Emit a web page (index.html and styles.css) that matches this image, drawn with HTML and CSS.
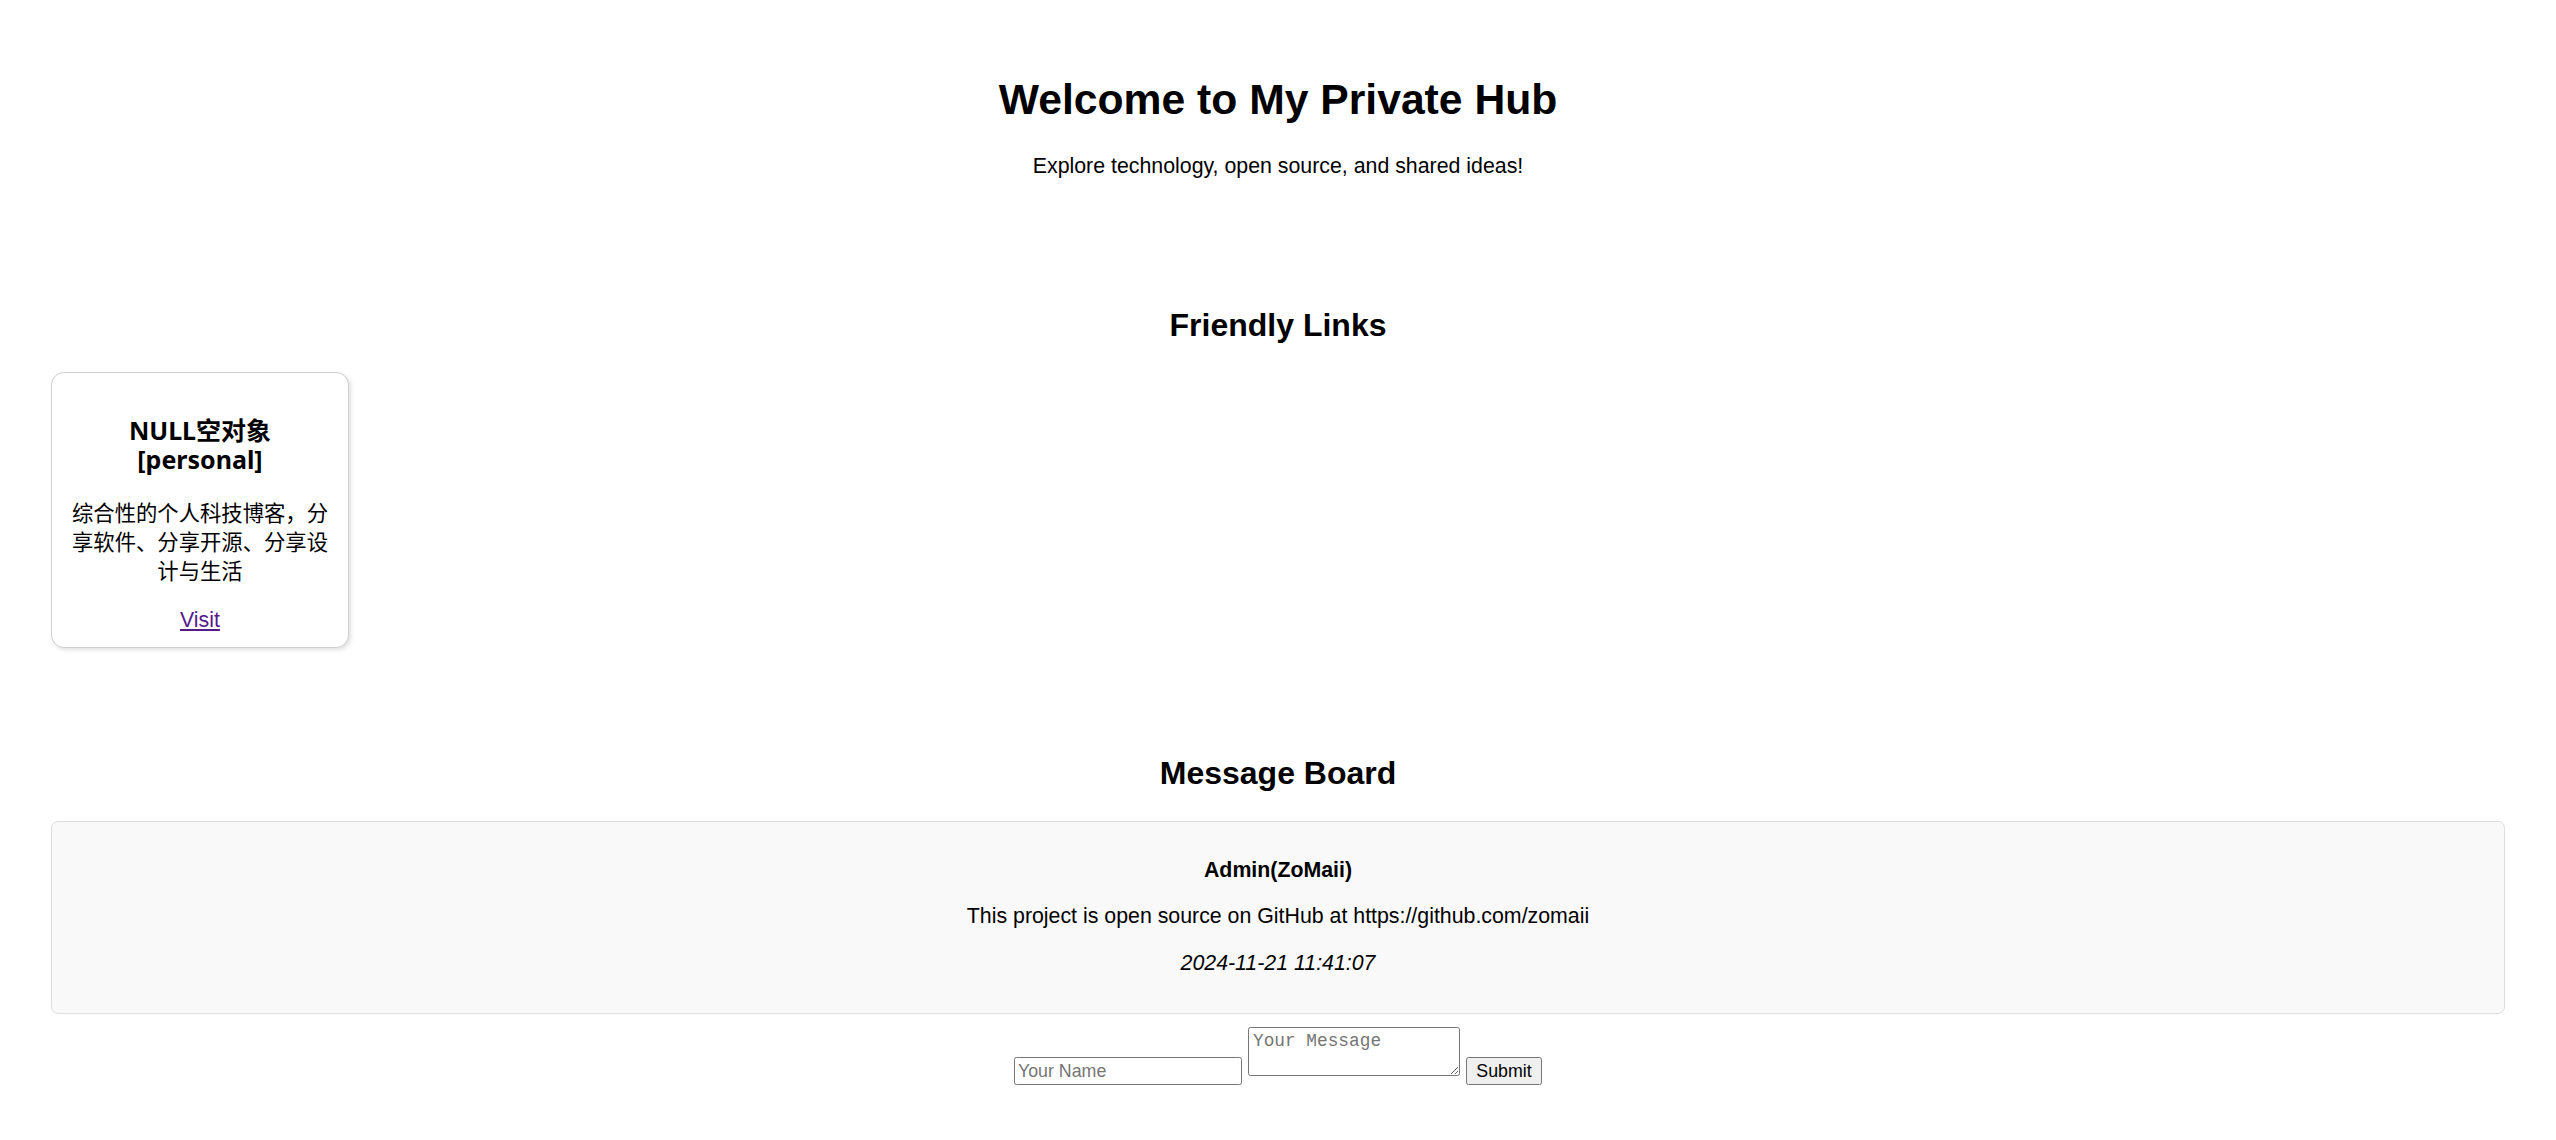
FILE: index.html
```html
<!DOCTYPE html>
<html lang="en">
<head>
<meta charset="utf-8">
<title>My Private Hub</title>
<link rel="stylesheet" href="styles.css">
</head>
<body>
<div class="page">
  <header class="hero">
    <h1 class="hero-title">Welcome to My Private Hub</h1>
    <p class="hero-sub">Explore technology, open source, and shared ideas!</p>
  </header>

  <section class="links">
    <h2 class="section-title">Friendly Links</h2>
    <div class="card-list">
      <div class="card">
        <h3 class="card-title"><span class="card-title-line">NULL空对象</span><span class="card-title-line">[personal]</span></h3>
        <p class="card-desc">综合性的个人科技博客，分享软件、分享开源、分享设计与生活</p>
        <div class="card-link"><a href="#" class="visit">Visit</a></div>
      </div>
    </div>
  </section>

  <section class="board">
    <h2 class="section-title board-title">Message Board</h2>
    <div class="message">
      <p class="msg-name">Admin(ZoMaii)</p>
      <p class="msg-text">This project is open source on GitHub at https://github.com/zomaii</p>
      <p class="msg-date">2024-11-21 11:41:07</p>
    </div>
    <form class="msg-form" onsubmit="return false;">
      <input class="field-name" type="text" placeholder="Your Name">
      <textarea class="field-msg" placeholder="Your Message"></textarea>
      <button class="field-btn" type="submit">Submit</button>
    </form>
  </section>
</div>
</body>
</html>
```

FILE: styles.css
```css
html, body {
  margin: 0;
  padding: 0;
  background: #ffffff;
}

body {
  font-family: "Liberation Sans", Arial, sans-serif;
  font-size: 21.33px;
  color: #000000;
}

.page {
  padding: 0 51px;
}

.hero {
  padding-top: 75px;
  text-align: center;
}

.hero-title {
  margin: 0;
  font-size: 42.67px;
  line-height: 49px;
  font-weight: bold;
}

.hero-sub {
  margin: 29.5px 0 0;
  line-height: 24.5px;
}

.links {
  margin-top: 128.5px;
}

.section-title {
  margin: 0 0 28.5px;
  font-size: 32px;
  line-height: 37px;
  font-weight: bold;
  text-align: center;
}

.card-list {
  display: flex;
  flex-wrap: wrap;
  gap: 20px;
}

.card {
  box-sizing: border-box;
  width: 298px;
  padding: 15px 15px 14.5px;
  border: 1px solid #cfcfcf;
  border-radius: 13px;
  box-shadow: 2px 2px 4px rgba(0, 0, 0, 0.12);
  text-align: center;
  background: #ffffff;
}

.card-title {
  margin: 28px 0 0;
  font-family: "Noto Sans", "Noto Sans CJK SC", sans-serif;
  font-size: 25px;
  line-height: 28.5px;
  font-weight: bold;
}

.card-title-line {
  display: block;
}

.card-desc {
  margin: 23.5px 0 24.5px;
  font-family: "Noto Sans CJK SC", sans-serif;
  font-size: 21.33px;
  line-height: 29px;
}

.card-link {
  line-height: 24.5px;
}

.visit {
  color: #551a8b;
  text-decoration: underline;
}

.board {
  margin-top: 106.5px;
}

.board-title {
  margin-bottom: 29.5px;
}

.message {
  padding: 13.5px 15px 16px;
  border: 1px solid #dddddd;
  border-radius: 7px;
  background: #f9f9f9;
  text-align: center;
}

.message p {
  margin: 22px 0;
  line-height: 24.5px;
}

.msg-name {
  font-weight: bold;
}

.msg-date {
  font-style: italic;
}

.msg-form {
  display: flex;
  justify-content: center;
  align-items: flex-end;
  gap: 6px;
  margin: 13px 0 0;
}

.field-name {
  box-sizing: border-box;
  width: 228px;
  height: 28px;
  margin: 0;
  padding: 1px 3px;
  border: 1.33px solid #767676;
  border-radius: 2.5px;
  font-family: "Liberation Sans", Arial, sans-serif;
  font-size: 17.8px;
  background: #ffffff;
}

.field-name::placeholder {
  color: #757575;
}

.field-msg {
  box-sizing: border-box;
  width: 212px;
  height: 49px;
  margin: 0 0 9px;
  padding: 3px 4px;
  border: 1.33px solid #767676;
  border-radius: 2.5px;
  font-family: "Liberation Mono", "Courier New", monospace;
  font-size: 17.8px;
  line-height: 20px;
  background: #ffffff;
}

.field-msg::placeholder {
  color: #757575;
}

.field-btn {
  box-sizing: border-box;
  width: 76px;
  height: 28px;
  margin: 0;
  padding: 1px 8px;
  border: 1.33px solid #767676;
  border-radius: 2.5px;
  background: #efefef;
  color: #000000;
  font-family: "Liberation Sans", Arial, sans-serif;
  font-size: 17.8px;
}
```
